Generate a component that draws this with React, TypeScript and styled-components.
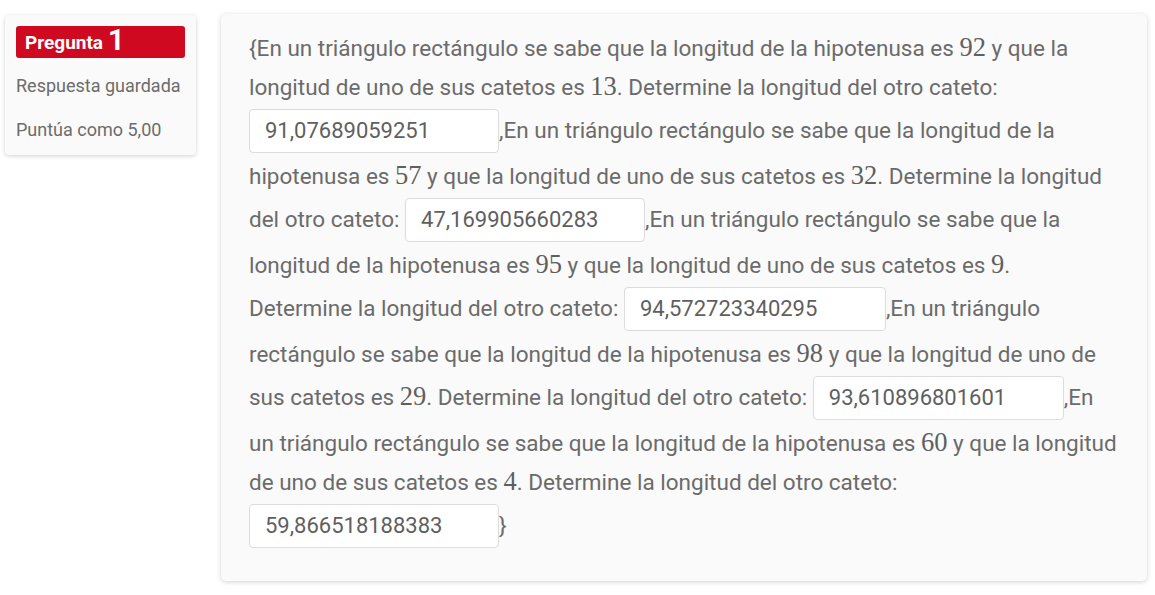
import React from "react";
import styled, { createGlobalStyle } from "styled-components";

const Global = createGlobalStyle`
  html, body { margin: 0; padding: 0; background: #ffffff; }
  body { font-family: Roboto, "Liberation Sans", sans-serif; color: #6b6b6b; }
`;

const Page = styled.div`
  display: flex;
  align-items: flex-start;
  gap: 25px;
  padding: 14px 8px 14px 5px;
`;

const InfoCard = styled.div`
  width: 191px;
  box-sizing: border-box;
  margin-top: 1px;
  padding: 11px 11px 3px 11px;
  background: #fafafa;
  border-radius: 4px;
  box-shadow: 0 1px 4px rgba(0, 0, 0, 0.18);
  display: flex;
  flex-direction: column;
`;

const Badge = styled.div`
  height: 32px;
  box-sizing: border-box;
  background: #cf0a20;
  color: #ffffff;
  border-radius: 3px;
  padding: 0 9px;
  display: flex;
  align-items: center;
  gap: 5px;
  font-weight: 700;
  font-size: 19px;
  margin-bottom: 6px;
`;

const BadgeNum = styled.span`
  font-size: 29px;
  line-height: 1;
  margin-top: -4px;
`;

const InfoLine = styled.div`
  font-size: 18px;
  color: #6c6c6c;
  line-height: 44px;
`;

const QuestionCard = styled.div`
  flex: 1;
  box-sizing: border-box;
  background: #fafafa;
  border-radius: 5px;
  box-shadow: 0 1px 5px rgba(0, 0, 0, 0.18);
  padding: 15px 30px 29px 28px;
  min-height: 566px;
`;

const Text = styled.div`
  font-size: 22.5px;
  line-height: 39px;
  color: #6b6b6b;
`;

const MathNum = styled.span`
  font-family: "Liberation Serif", "DejaVu Serif", serif;
  font-size: 26.5px;
  line-height: 1;
  color: #5f5f5f;
`;

const Answer = styled.span<{ $w: number }>`
  display: inline-block;
  box-sizing: border-box;
  width: ${(p) => p.$w}px;
  height: 44px;
  line-height: 42px;
  vertical-align: middle;
  margin: 2px 0 4px 0;
  padding: 0 15px;
  background: #ffffff;
  border: 1px solid #dcdcdc;
  border-radius: 4px;
  font-size: 22px;
  color: #5f5f5f;
`;

const parts: Array<{ h: string; c: string; ans: string; w: number; lead: string }> = [
  { lead: "{En", h: "92", c: "13", ans: "91,07689059251", w: 250 },
  { lead: ",En", h: "57", c: "32", ans: "47,169905660283", w: 240 },
  { lead: ",En", h: "95", c: "9", ans: "94,572723340295", w: 262 },
  { lead: ",En", h: "98", c: "29", ans: "93,610896801601", w: 251 },
  { lead: ",En", h: "60", c: "4", ans: "59,866518188383", w: 250 },
];

export default function App() {
  return (
    <>
      <Global />
      <Page>
        <InfoCard>
          <Badge>
            Pregunta <BadgeNum>1</BadgeNum>
          </Badge>
          <InfoLine>Respuesta guardada</InfoLine>
          <InfoLine>Puntúa como 5,00</InfoLine>
        </InfoCard>
        <QuestionCard>
          <Text>
            {parts.map((p, i) => (
              <React.Fragment key={i}>
                {p.lead} un triángulo rectángulo se sabe que la longitud de la hipotenusa es{" "}
                <MathNum>{p.h}</MathNum> y que la longitud de uno de sus catetos es{" "}
                <MathNum>{p.c}</MathNum>. Determine la longitud del otro cateto:{" "}
                <Answer $w={p.w}>{p.ans}</Answer>
              </React.Fragment>
            ))}
            {"}"}
          </Text>
        </QuestionCard>
      </Page>
    </>
  );
}
